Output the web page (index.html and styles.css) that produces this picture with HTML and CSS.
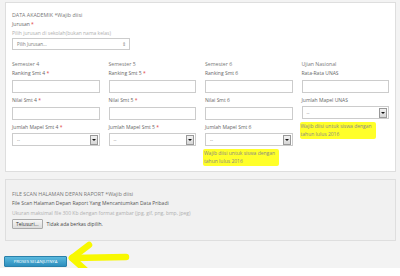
FILE: index.html
```html
<!DOCTYPE html>
<html lang="id">
<head>
  <meta charset="UTF-8">
  <title>Data Akademik</title>
  <link rel="stylesheet" href="styles.css">
</head>
<body>
  <div class="page">
    <section class="panel">
      <div class="title">DATA AKADEMIK *Wajib diisi</div>
      <div class="label">Jurusan <span class="req">*</span></div>
      <div class="hint">Pilih jurusan di sekolah(bukan nama kelas)</div>
      <div class="select select-wide">
        <span>Pilih Jurusan...</span>
        <span class="updown">&#8661;</span>
      </div>

      <div class="grid">
        <div class="col">
          <div class="heading">Semester 4</div>
          <div class="label">Ranking Smt 4 <span class="req">*</span></div>
          <div class="input"></div>
          <div class="label">Nilai Smt 4 <span class="req">*</span></div>
          <div class="input"></div>
          <div class="label">Jumlah Mapel Smt 4 <span class="req">*</span></div>
          <div class="select"><span>--</span><span class="drop"></span></div>
        </div>
        <div class="col">
          <div class="heading">Semester 5</div>
          <div class="label">Ranking Smt 5 <span class="req">*</span></div>
          <div class="input"></div>
          <div class="label">Nilai Smt 5 <span class="req">*</span></div>
          <div class="input"></div>
          <div class="label">Jumlah Mapel Smt 5 <span class="req">*</span></div>
          <div class="select"><span>--</span><span class="drop"></span></div>
        </div>
        <div class="col">
          <div class="heading">Semester 6</div>
          <div class="label">Ranking Smt 6</div>
          <div class="input"></div>
          <div class="label">Nilai Smt 6</div>
          <div class="input"></div>
          <div class="label">Jumlah Mapel Smt 6</div>
          <div class="select"><span>--</span><span class="drop"></span></div>
          <div class="mark">Wajib diisi untuk siswa dengan<br>tahun lulus 2016</div>
        </div>
        <div class="col">
          <div class="heading">Ujian Nasional</div>
          <div class="label">Rata-Rata UNAS</div>
          <div class="input"></div>
          <div class="label">Jumlah Mapel UNAS</div>
          <div class="select"><span>--</span><span class="drop"></span></div>
          <div class="mark">Wajib diisi untuk siswa dengan<br>tahun lulus 2016</div>
        </div>
      </div>
    </section>

    <section class="panel panel-file">
      <div class="title">FILE SCAN HALAMAN DEPAN RAPORT *Wajib diisi</div>
      <div class="label label-dark">File Scan Halaman Depan Raport Yang Mencantumkan Data Pribadi</div>
      <div class="hint">Ukuran maksimal file 300 Kb dengan format gambar (jpg, gif, png, bmp, jpeg)</div>
      <div class="file">
        <span class="file-btn">Telusuri...</span>
        <span class="file-name">Tidak ada berkas dipilih.</span>
      </div>
    </section>

    <div class="actions">
      <button class="submit">PROSES SELANJUTNYA</button>
      <svg class="arrow" width="62" height="36" viewBox="0 0 62 36">
        <path d="M5 15 L58 14" />
        <path d="M4 15 L21 2" />
        <path d="M4 15 L25 34" />
      </svg>
    </div>
  </div>
</body>
</html>
```

FILE: styles.css
```css
html {
  background: #fff;
}

body {
  margin: 0;
  font-family: 'Open Sans', sans-serif;
  font-size: 5px;
  color: #666;
}

.page {
  background: #f3f3f3;
  height: 268px;
  padding: 2px 4px 0 5px;
  box-sizing: border-box;
}

.panel {
  background: #fff;
  border: 1px solid #dedede;
  padding: 8px 6px 0 6px;
  height: 170px;
  box-sizing: border-box;
}

.title {
  line-height: 9px;
  color: #777;
  font-size: 5.3px;
}

.label {
  line-height: 9px;
  color: #666;
}

.label-dark {
  color: #555;
}

.req {
  color: #e03a3a;
}

.hint {
  line-height: 9px;
  color: #b0b0b0;
}

.select {
  display: flex;
  align-items: center;
  justify-content: space-between;
  height: 11px;
  border: 1px solid #ccc;
  background: #fff;
  padding: 0 1px 0 4px;
  color: #777;
  font-size: 4.5px;
  margin-top: 1px;
}

.select-wide {
  width: 118px;
  box-sizing: border-box;
  height: 12px;
  margin-top: 0;
}

.updown {
  font-size: 5px;
  color: #888;
  margin-right: 2px;
}

.drop {
  width: 6px;
  height: 8px;
  border: 1px solid #999;
  background: linear-gradient(#f2f2f2, #d6d6d6);
  position: relative;
}

.drop::after {
  content: '';
  position: absolute;
  left: 1px;
  top: 3px;
  border-left: 2px solid transparent;
  border-right: 2px solid transparent;
  border-top: 2px solid #111;
}

.grid {
  display: grid;
  grid-template-columns: repeat(4, 1fr);
  column-gap: 9px;
  margin-top: 10px;
}

.col {
  display: flex;
  flex-direction: column;
  align-items: stretch;
}

.heading {
  line-height: 9px;
  color: #777;
  font-size: 5.2px;
}

.col .label {
  margin-top: 3.5px;
}

.col .heading + .label {
  margin-top: 0;
}

.input {
  height: 11px;
  border: 1px solid #ccc;
  background: #fff;
  margin-top: 1.5px;
}

.mark {
  background: #ffff2a;
  color: #888;
  line-height: 7.5px;
  padding: 1px 4px 1px 1px;
  margin: 3px 0 0 -2px;
  align-self: flex-start;
  border-radius: 2px;
}

.panel-file {
  margin-top: 7px;
  background: #f1f1f1;
  height: 62px;
  padding-top: 10px;
}

.panel-file .hint {
  line-height: 11px;
}

.file {
  display: flex;
  align-items: center;
  gap: 4px;
}

.file-btn {
  display: inline-block;
  border: 1px solid #aaa;
  background: linear-gradient(#f6f6f6, #dcdcdc);
  color: #333;
  padding: 0 3px;
  line-height: 8px;
  border-radius: 1px;
}

.file-name {
  color: #444;
}

.actions {
  display: flex;
  align-items: flex-start;
  margin-top: 2px;
  margin-left: -1px;
}

.submit {
  margin-top: 13px;
  width: 63px;
  height: 11px;
  padding: 0;
  font-family: 'Open Sans', sans-serif;
  font-size: 4.2px;
  color: #fff;
  background: linear-gradient(#5ab9de, #2d8ebd);
  border: 1px solid #2a80aa;
  border-radius: 1px;
}

.arrow {
  margin-left: 1px;
  overflow: visible;
}

.arrow path {
  fill: none;
  stroke: #f8f800;
  stroke-width: 6.5;
  stroke-linecap: round;
}
```
